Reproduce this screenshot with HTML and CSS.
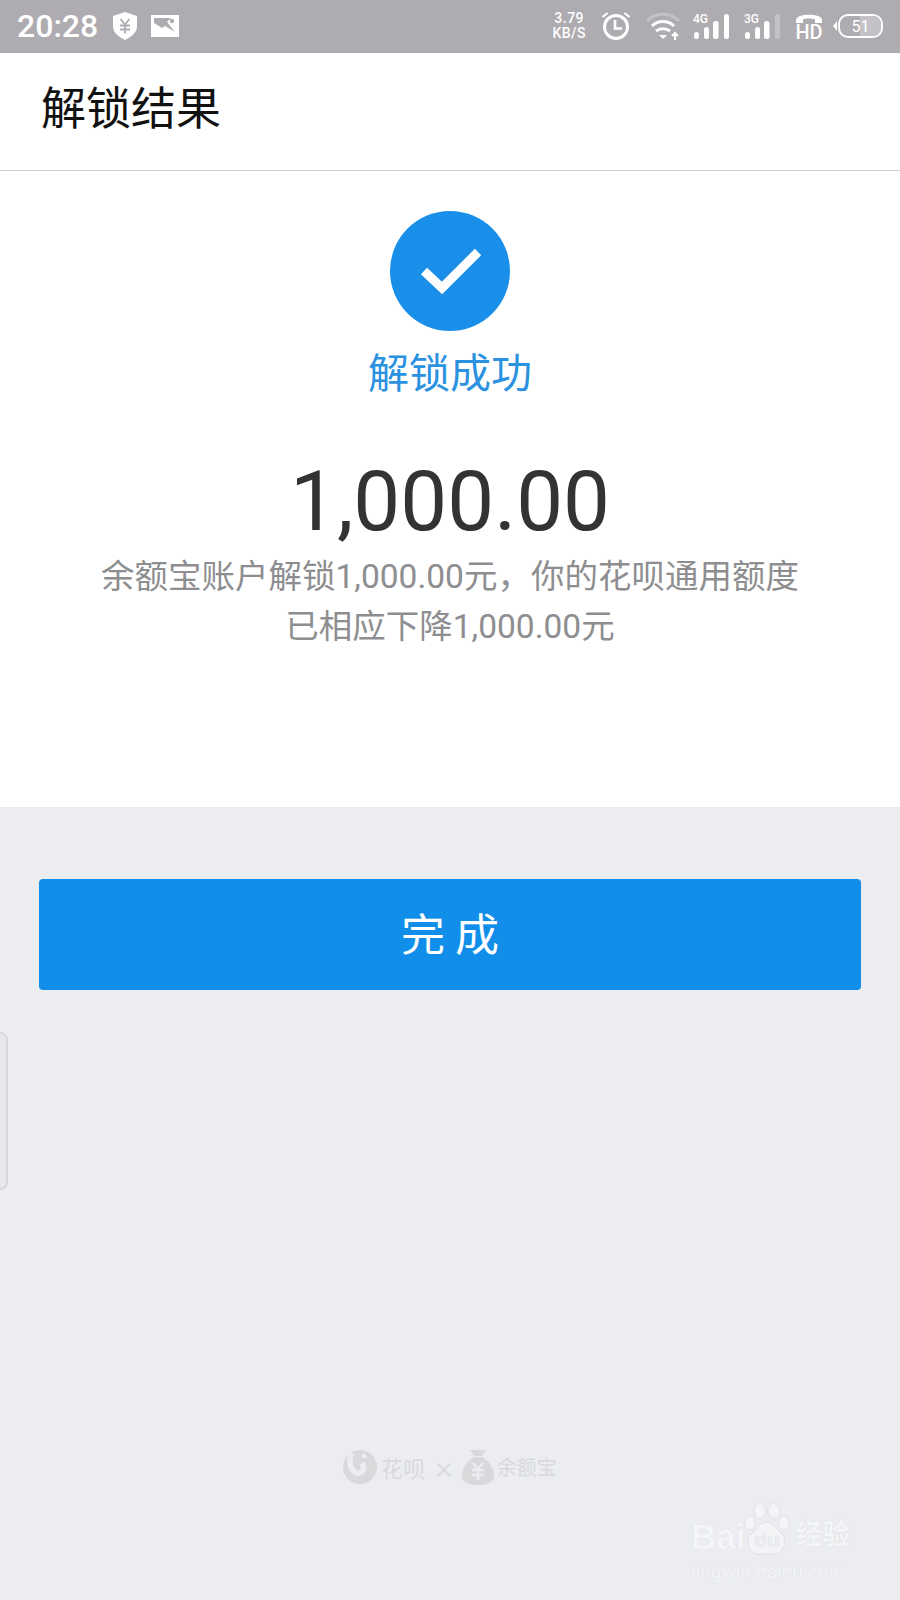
FILE: index.html
```html
<!DOCTYPE html>
<html lang="zh-CN">
<head>
  <meta charset="UTF-8" />
  <meta name="viewport" content="width=device-width, initial-scale=1" />
  <title>解锁结果</title>
  <link rel="stylesheet" href="styles.css">
</head>
<body>
  <div class="phone">
    <div class="status-bar">
      <span class="clock">20:28</span>
      <svg width="26" height="28" viewBox="0 0 26 28"><path d="M13 0 25 4v10c0 7-6 11-12 14C7 25 1 21 1 14V4z" fill="#fff"/><path d="M8.5 7l4.500 5.500L17.500 7M8 13.500h10M8 17.500h10M13 12.500v9" fill="none" stroke="#aeacb0" stroke-width="1.800"/></svg>
      <svg class="ic-pic" width="28" height="22" viewBox="0 0 28 22"><path d="M0 0h28v22H0z" fill="#fff"/><path d="M3 3h17l-4 4 8 10-10-6-3 2-8-5z" fill="#aeacb0"/><circle cx="21" cy="6" r="2.200" fill="#aeacb0"/></svg>
      <div class="status-right">
        <div class="speed"><span>3.79</span><span>KB/S</span></div>
        <svg width="30" height="30" viewBox="0 0 30 30"><circle cx="15" cy="16" r="11.500" fill="none" stroke="#fff" stroke-width="3"/><path d="M14 9v8.500h7" fill="none" stroke="#fff" stroke-width="2.600"/><path d="M1.500 6l5-4M28.500 6l-5-4" stroke="#fff" stroke-width="2.200"/></svg>
        <svg width="34" height="28" viewBox="0 0 34 28"><path d="M1 9c9-9 23-9 32 0" fill="none" stroke="#c4c2c6" stroke-width="3"/><path d="M6 14c6-6 16-6 22 0M10 19c4-3 10-3 14 0" fill="none" stroke="#fff" stroke-width="3"/><path d="M13 23h8l-4 4z" fill="#fff"/><path d="M29 28v-7M26 24l3-3 3 3" fill="none" stroke="#fff" stroke-width="2"/></svg>
        <div class="signal signal-first">
          <span class="net">4G</span>
          <svg width="36" height="25" viewBox="0 0 36 25"><rect x="1" y="18" width="5" height="7" rx="2.500" fill="#fff"/><rect x="11" y="13" width="5" height="12" rx="2.500" fill="#fff"/><rect x="20" y="7" width="5.500" height="18" rx="2.500" fill="#fff"/><rect x="31" y="0" width="5" height="25" rx="2.500" fill="#fff"/></svg>
        </div>
        <div class="signal">
          <span class="net">3G</span>
          <svg width="36" height="25" viewBox="0 0 36 25"><rect x="1" y="18" width="5" height="7" rx="2.500" fill="#fff"/><rect x="11" y="13" width="5" height="12" rx="2.500" fill="#fff"/><rect x="20" y="7" width="5.500" height="18" rx="2.500" fill="#fff"/><rect x="31" y="0" width="5" height="25" rx="2.500" fill="#c4c2c6"/></svg>
        </div>
        <div class="hd">
          <svg width="28" height="11" viewBox="0 0 28 11"><path d="M1 10V7C1 0 27 0 27 7v3h-7V7c0-2-12-2-12 0v3z" fill="#fff"/></svg>
          <span>HD</span>
        </div>
        <div class="battery-wrap">
          <div class="battery-nub"></div>
          <div class="battery"><div class="battery-level"></div><span>51</span></div>
        </div>
      </div>
    </div>

    <header class="nav-bar">解锁结果</header>

    <section class="result">
      <div class="check-icon">
        <svg width="120" height="120" viewBox="0 0 120 120"><path d="M34 60 L52 77 L88 41" fill="none" stroke="#fff" stroke-width="9"/></svg>
      </div>
      <p class="result-title">解锁成功</p>
      <p class="amount">1,000.00</p>
      <p class="desc">余额宝账户解锁1,000.00元，你的花呗通用额度<br>已相应下降1,000.00元</p>
    </section>

    <div class="actions">
      <button class="done-btn">完成</button>
    </div>

    <div class="side-handle"></div>

    <footer class="brand">
      <svg width="34" height="37" viewBox="0 0 34 37"><circle cx="17" cy="19" r="17" fill="#d8d9db"/><path d="M9 5C5 12 7 23 14 25c6 1 8-5 5-10" fill="none" stroke="#ecedf1" stroke-width="5.500"/><circle cx="21" cy="8" r="2.500" fill="#ecedf1"/></svg>
      <span class="brand-name">花呗</span>
      <span class="brand-x">×</span>
      <svg width="32" height="36" viewBox="0 0 32 36"><path d="M8 1h16l-4 6h-8z" fill="#d8d9db"/><path d="M12 8h8c7 4 12 11 12 18 0 7-5 10-16 10S0 33 0 26C0 19 5 12 12 8z" fill="#d8d9db"/><path d="M11 14l5 6 5-6M10 21h12M10 26h12M16 20v11" fill="none" stroke="#ecedf1" stroke-width="2.500"/></svg>
      <span class="brand-name brand-name-small">余额宝</span>
    </footer>

    <div class="watermark">
      <div class="wm-top">
        <span class="wm-bai">Bai</span>
        <svg class="wm-paw" width="48" height="52" viewBox="0 0 48 52"><g fill="#f3f4f6" stroke="#e0e1e4"><ellipse cx="7" cy="20" rx="5.500" ry="7"/><ellipse cx="17" cy="8" rx="6" ry="7.500"/><ellipse cx="31" cy="8" rx="6" ry="7.500"/><ellipse cx="41" cy="20" rx="5.500" ry="7"/><path d="M24 19c8 0 9 8 15 12 6 6 2 20-7 20H15C6 51 2 37 8 31c6-4 8-12 16-12z"/></g><text class="wm-du" x="24" y="44" text-anchor="middle">du</text></svg>
        <span class="wm-cn">经验</span>
      </div>
      <div class="wm-url">jingyan.baidu.com</div>
    </div>
  </div>
</body>
</html>
```

FILE: styles.css
```css
html, body {
  margin: 0;
  padding: 0;
}
body {
  font-family: Roboto, "Noto Sans CJK SC", sans-serif;
  background-color: #ecedf1;
}
p {
  margin: 0;
}
.phone {
  position: relative;
  width: 900px;
  height: 1600px;
  overflow: hidden;
  background-color: #ecedf1;
}

/* status bar */
.status-bar {
  height: 53px;
  padding: 0 17px 1px 17px;
  box-sizing: border-box;
  display: flex;
  align-items: center;
  background-color: #aeacb0;
  color: #fff;
}
.clock {
  font-size: 32px;
  font-weight: 500;
  margin-right: 14px;
}
.ic-pic {
  margin-left: 13px;
}
.status-right {
  margin-left: auto;
  display: flex;
  align-items: center;
  gap: 15px;
}
.speed {
  display: flex;
  flex-direction: column;
  align-items: center;
  font-size: 14px;
  font-weight: 500;
  line-height: 15px;
  letter-spacing: 0.5px;
}
.signal {
  position: relative;
  width: 36px;
  height: 25px;
}
.signal-first {
  margin-left: -2px;
}
.net {
  position: absolute;
  left: 0;
  top: -1px;
  font-size: 12px;
  line-height: 12px;
  font-weight: 500;
}
.hd {
  display: flex;
  flex-direction: column;
  align-items: center;
  font-size: 20px;
  font-weight: 500;
  line-height: 16px;
}
.hd svg {
  display: block;
}
.battery-wrap {
  display: flex;
  align-items: center;
  margin-left: -5px;
}
.battery-nub {
  width: 0;
  height: 0;
  border: 5px solid transparent;
  border-right: 4px solid #fff;
  border-left: 0;
  margin-right: 1px;
}
.battery {
  position: relative;
  width: 45px;
  height: 24px;
  box-sizing: border-box;
  border: 2px solid #fff;
  border-radius: 10px;
  display: flex;
  align-items: center;
  justify-content: center;
  font-size: 16px;
  overflow: hidden;
}
.battery-level {
  position: absolute;
  right: 0;
  top: 0;
  bottom: 0;
  width: 52%;
  background-color: #c4c2c6;
}
.battery span {
  position: relative;
}

/* header */
.nav-bar {
  height: 118px;
  padding: 0 0 12px 41px;
  display: flex;
  align-items: center;
  box-sizing: border-box;
  background-color: #fff;
  border-bottom: 1px solid #d0d0d2;
  font-size: 45px;
  color: #111;
}

/* result */
.result {
  height: 636px;
  padding-top: 40px;
  box-sizing: border-box;
  display: flex;
  flex-direction: column;
  align-items: center;
  background-color: #fff;
}
.check-icon {
  width: 120px;
  height: 120px;
  border-radius: 50%;
  background-color: #1a8fe9;
}
.check-icon svg {
  display: block;
}
.result-title {
  margin-top: 16px;
  font-size: 41px;
  line-height: 54px;
  color: #2a92df;
}
.amount {
  margin-top: 51px;
  font-size: 83.5px;
  line-height: 100px;
  color: #333;
}
.desc {
  font-size: 33.5px;
  line-height: 50px;
  text-align: center;
  color: #8e8e90;
}

/* button */
.actions {
  padding: 72px 39px 0;
}
.done-btn {
  display: block;
  width: 100%;
  height: 111px;
  padding: 0 0 5px 10px;
  border: 0;
  border-radius: 4px;
  background-color: #108ee9;
  color: #fff;
  font-family: inherit;
  font-size: 44px;
  letter-spacing: 10px;
}

/* floating bits */
.side-handle {
  position: absolute;
  left: -10px;
  top: 1032px;
  width: 14px;
  height: 154px;
  border: 2px solid #d8d8dc;
  border-radius: 8px;
  background-color: #e9e8ec;
}
.brand {
  position: absolute;
  left: 343px;
  top: 1448px;
  display: flex;
  align-items: center;
  color: #d8d9db;
}
.brand-name {
  margin-left: 4px;
  font-size: 22px;
}
.brand-name-small {
  font-size: 20px;
  margin-left: 3px;
}
.brand-x {
  margin: 0 9px 0 10px;
  font-size: 34px;
  font-weight: 300;
  line-height: 30px;
}
.watermark {
  position: absolute;
  left: 691px;
  top: 1503px;
  color: #f4f5f7;
  text-shadow: 0 0 1px #d6d7da;
}
.wm-top {
  display: flex;
  align-items: flex-end;
  height: 52px;
}
.wm-bai {
  font-family: "Liberation Sans", sans-serif;
  font-size: 35px;
  font-weight: 700;
  line-height: 36px;
}
.wm-paw {
  margin-left: -2px;
}
.wm-du {
  font-family: "Liberation Sans", sans-serif;
  font-size: 21px;
  font-weight: 700;
  fill: #ecedf1;
}
.wm-cn {
  margin-left: 4px;
  font-size: 27px;
  font-weight: 700;
  line-height: 40px;
}
.wm-url {
  font-size: 19px;
  line-height: 24px;
  margin-top: 5px;
}
```
